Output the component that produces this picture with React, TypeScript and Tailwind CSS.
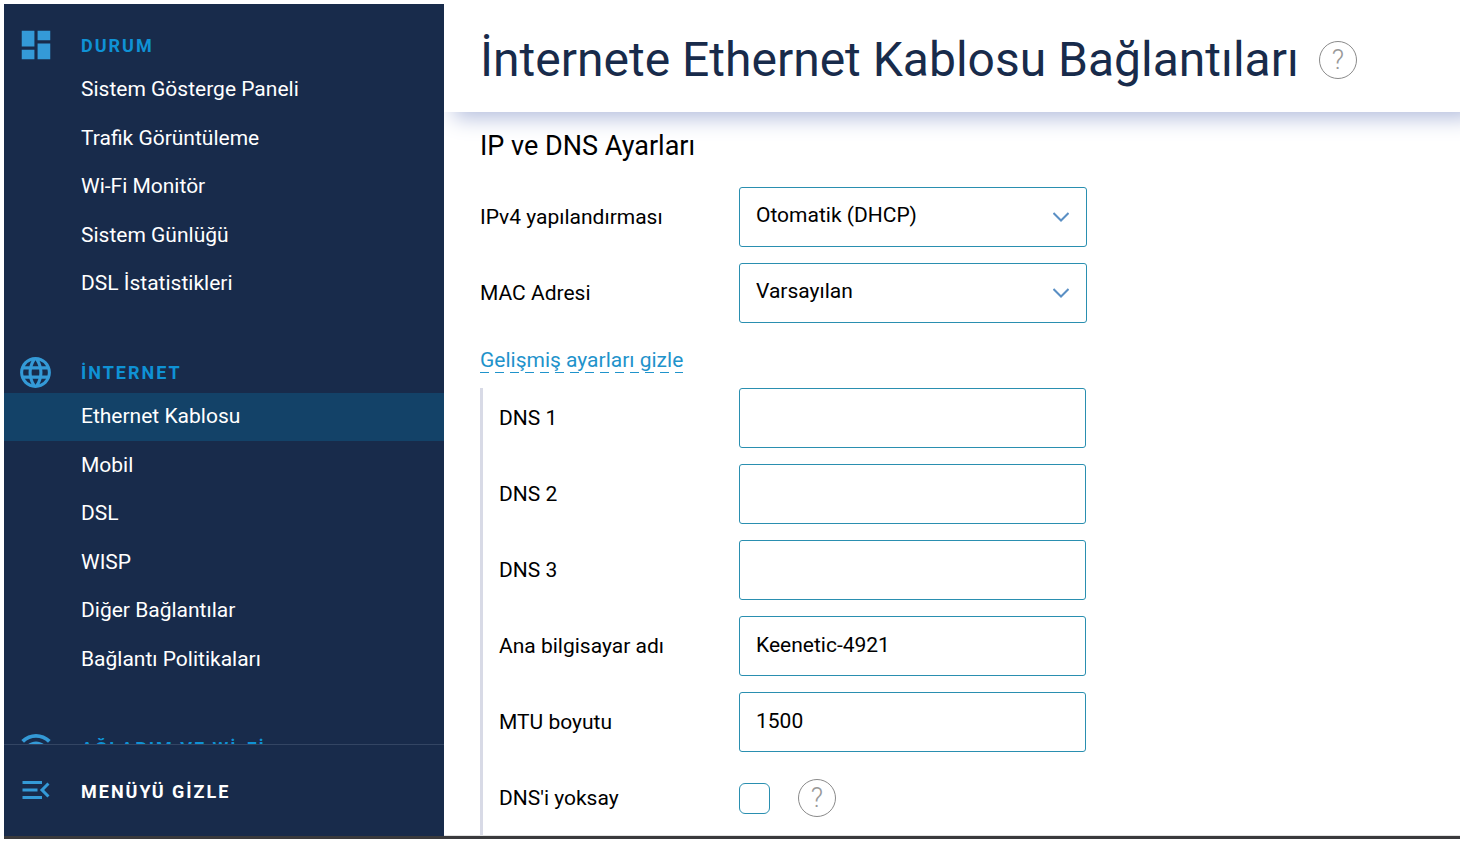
import React from 'react';
import {
  MdDashboard,
  MdLanguage,
  MdMenuOpen,
  MdWifi,
} from 'react-icons/md';

const sections = [
  {
    title: 'DURUM',
    icon: <MdDashboard className="size-[38px]" />,
    items: [
      'Sistem Gösterge Paneli',
      'Trafik Görüntüleme',
      'Wi-Fi Monitör',
      'Sistem Günlüğü',
      'DSL İstatistikleri',
    ],
  },
  {
    title: 'İNTERNET',
    icon: <MdLanguage className="size-[37px]" />,
    items: [
      'Ethernet Kablosu',
      'Mobil',
      'DSL',
      'WISP',
      'Diğer Bağlantılar',
      'Bağlantı Politikaları',
    ],
  },
  {
    title: 'AĞLARIM VE Wİ-Fİ',
    icon: <MdWifi className="mb-2 size-8" />,
    items: [],
  },
];

const active = 'Ethernet Kablosu';

const Sidebar = () => {
  return (
    <aside className="flex w-[440px] shrink-0 flex-col bg-[#182b4b]">
      <nav className="flex min-h-0 flex-1 flex-col gap-[43px] overflow-hidden pt-5">
        {sections.map((section) => (
          <div key={section.title} className="shrink-0">
            <div className="flex h-[42px] items-center">
              <span className="flex w-[77px] justify-center pr-3.5 text-[#349ad7]">
                {section.icon}
              </span>
              <h2 className="pt-0.5 text-lg font-bold tracking-[2px] text-[#0f92d5]">
                {section.title}
              </h2>
            </div>
            <ul>
              {section.items.map((item) => (
                <li key={item} className="h-12 even:h-[49px]">
                  <a
                    href="#"
                    className={
                      item === active
                        ? 'flex h-full items-center bg-[#134268] pb-0.5 pl-[77px] text-white'
                        : 'flex h-full items-center pb-0.5 pl-[77px] text-white hover:bg-[#134268]'
                    }
                  >
                    {item}
                  </a>
                </li>
              ))}
            </ul>
          </div>
        ))}
      </nav>
      <button
        type="button"
        className="flex h-[92px] shrink-0 items-center border-t border-[#334563] text-left text-lg font-bold tracking-[2px] text-white"
      >
        <span className="flex w-[77px] justify-center pr-3.5 pb-0.5 text-[#349ad7]">
          <MdMenuOpen className="size-9" />
        </span>
        <span className="pt-0.5">MENÜYÜ GİZLE</span>
      </button>
    </aside>
  );
};

const Help = () => {
  return (
    <button
      type="button"
      aria-label="Yardım"
      className="flex size-[38px] shrink-0 items-center justify-center rounded-full border border-[#8a8a8a] text-[27px] leading-none font-light text-[#999999]"
    >
      ?
    </button>
  );
};

type SelectRowProps = { id: string; label: string; options: string[] };

const SelectRow = ({ id, label, options }: SelectRowProps) => {
  return (
    <div className="flex items-center">
      <label htmlFor={id} className="w-[259px] shrink-0">
        {label}
      </label>
      <div className="relative w-[348px]">
        <select
          id={id}
          className="h-15 w-full appearance-none rounded-[3px] border border-[#2a8fb0] bg-white pr-12 pb-1 pl-4"
        >
          {options.map((option) => (
            <option key={option}>{option}</option>
          ))}
        </select>
        <svg
          viewBox="0 0 16 10"
          className="pointer-events-none absolute top-[25px] right-[18px] h-2.5 w-4 fill-none stroke-[#5a8fc4] stroke-2"
        >
          <path d="M0.5 1l7.5 7.5L15.5 1" />
        </svg>
      </div>
    </div>
  );
};

type TextRowProps = { id: string; label: string; value?: string };

const TextRow = ({ id, label, value = '' }: TextRowProps) => {
  return (
    <div className="flex items-center">
      <label htmlFor={id} className="w-60 shrink-0">
        {label}
      </label>
      <input
        id={id}
        type="text"
        defaultValue={value}
        className="h-15 w-[347px] rounded-[3px] border border-[#2a8fb0] bg-white px-4 pb-0.5"
      />
    </div>
  );
};

export default function App() {
  return (
    <div className="h-screen bg-white p-1 font-['Roboto',sans-serif] text-[21px] leading-7 text-black">
      <div className="flex h-full overflow-hidden border-b-[3px] border-[#3a3a3c]">
        <Sidebar />
        <main className="min-w-0 flex-1 overflow-hidden border-b border-[#e2e2e2]">
          <header className="-mr-6 flex h-27 items-center gap-5 bg-white pt-1 pl-9 shadow-[0_16px_20px_-10px_#b4bedd]">
            <h1 className="text-5xl text-[#182b4b]">
              İnternete Ethernet Kablosu Bağlantıları
            </h1>
            <Help />
          </header>
          <form className="pl-9">
            <h2 className="pt-4 pb-[22px] text-[27px] leading-[37px]">
              IP ve DNS Ayarları
            </h2>
            <div className="flex flex-col gap-4">
              <SelectRow
                id="ipv4"
                label="IPv4 yapılandırması"
                options={['Otomatik (DHCP)', 'Manuel']}
              />
              <SelectRow
                id="mac"
                label="MAC Adresi"
                options={['Varsayılan', 'Manuel']}
              />
            </div>
            <div className="flex pt-[25px] pb-[15px]">
              <button type="button" className="leading-6 text-[#1f93cb]">
                Gelişmiş ayarları gizle
                <span className="block h-px bg-[repeating-linear-gradient(90deg,#1f93cb_0_9px,transparent_9px_15px)]" />
              </button>
            </div>
            <div className="flex flex-col gap-4 border-l-[3px] border-[#d8dae6] pb-8 pl-4">
              <TextRow id="dns1" label="DNS 1" />
              <TextRow id="dns2" label="DNS 2" />
              <TextRow id="dns3" label="DNS 3" />
              <TextRow
                id="hostname"
                label="Ana bilgisayar adı"
                value="Keenetic-4921"
              />
              <TextRow id="mtu" label="MTU boyutu" value="1500" />
              <div className="flex h-15 items-center">
                <label htmlFor="ignore-dns" className="w-60 shrink-0">
                  DNS'i yoksay
                </label>
                <input
                  id="ignore-dns"
                  type="checkbox"
                  className="mr-7 size-[31px] appearance-none rounded-md border border-[#2a8fb0] bg-white checked:bg-[#2a8fb0]"
                />
                <Help />
              </div>
            </div>
          </form>
        </main>
      </div>
    </div>
  );
}
